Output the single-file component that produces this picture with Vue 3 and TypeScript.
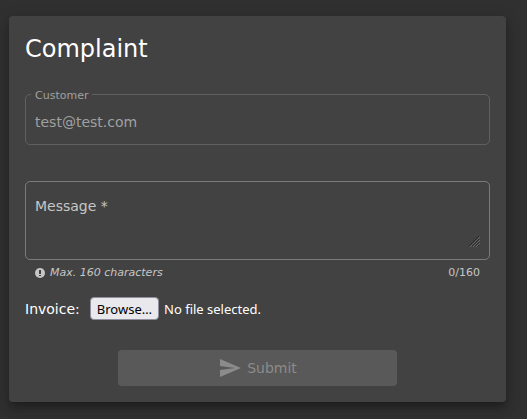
<script setup lang="ts">
import { computed, ref } from 'vue'

const MAX_LENGTH = 160

const customer = ref('test@test.com')
const message = ref('')
const fileName = ref('')
const fileInput = ref<HTMLInputElement | null>(null)

const canSubmit = computed(() => message.value.trim().length > 0)

function onFileChange(event: Event): void {
  const input = event.target as HTMLInputElement
  fileName.value = input.files?.[0]?.name ?? ''
}
</script>

<template>
  <main class="card">
    <h1 class="title">Complaint</h1>
    <form class="form" @submit.prevent>
      <fieldset class="outline customer" disabled>
        <legend class="legend"><label for="customer">Customer</label></legend>
        <input id="customer" v-model="customer" class="text-input" type="text" />
      </fieldset>

      <div class="message-field">
        <div class="outline message">
          <textarea
            id="message"
            v-model="message"
            class="textarea"
            rows="3"
            :maxlength="MAX_LENGTH"
            required
          ></textarea>
          <label class="message-label" :class="{ floating: message }" for="message">Message *</label>
          <svg class="grip" viewBox="0 0 11 11" aria-hidden="true">
            <path class="grip-dark" d="M0 10 10 0M3 10 10 3M6 10 10 6M9 10 10 9" />
            <path class="grip-light" d="M1 11 11 1M4 11 11 4M7 11 11 7" />
          </svg>
        </div>
        <div class="hints">
          <svg class="hint-icon" viewBox="0 0 10 10" aria-hidden="true">
            <circle cx="5" cy="5" r="5" fill="#c6c6c6" />
            <path d="M4 2h2v4H4zM4 7h2v1H4z" fill="#424242" />
          </svg>
          <em>Max. 160 characters</em>
          <span class="counter">{{ message.length }}/{{ MAX_LENGTH }}</span>
        </div>
      </div>

      <div class="invoice">
        <label for="invoice">Invoice:</label>
        <input
          id="invoice"
          ref="fileInput"
          class="file-input"
          type="file"
          tabindex="-1"
          @change="onFileChange"
        />
        <button class="browse" type="button" @click="fileInput?.click()">Browse…</button>
        <span class="file-name">{{ fileName || 'No file selected.' }}</span>
      </div>

      <button class="submit" type="submit" :disabled="!canSubmit">
        <svg class="send" viewBox="0 0 24 24" aria-hidden="true">
          <path d="M2.01 21L23 12 2.01 3 2 10l15 2-15 2z" fill="currentColor" />
        </svg>
        <span>Submit</span>
      </button>
    </form>
  </main>
</template>

<style>
body {
  background: #303030;
}
</style>

<style scoped>
.card {
  margin: 16px 21px 16px 9px;
  padding: 16px;
  border-radius: 4px;
  background: #424242;
  color: #fff;
  font: 14px/20px "DejaVu Sans", sans-serif;
  box-shadow:
    0 5px 5px -3px rgba(0, 0, 0, 0.2),
    0 8px 10px 1px rgba(0, 0, 0, 0.14),
    0 3px 14px 2px rgba(0, 0, 0, 0.12);
}

.title {
  margin: 0 0 21px;
  font-size: 24px;
  line-height: 34px;
  font-weight: 400;
}

.form {
  display: flex;
  flex-direction: column;
}

.outline {
  box-sizing: border-box;
  min-width: 0;
  margin: 0;
  border: 1px solid #7b7b7b;
  border-radius: 5px;
}

.customer {
  padding: 0 9px 12px 5px;
  border-color: #606060;
  color: #a0a0a0;
}

.legend {
  padding: 2px 4px 0;
  font-size: 11px;
  line-height: 13px;
}

.text-input,
.textarea {
  display: block;
  box-sizing: border-box;
  width: 100%;
  margin: 0;
  padding: 0;
  border: 0;
  outline: 0;
  background: transparent;
  color: inherit;
  font: inherit;
}

.text-input {
  height: 20px;
  margin-top: 10px;
  padding-left: 4px;
}

.message-field {
  margin-top: 36px;
}

.message {
  position: relative;
  padding: 14px 9px 12px;
}

.message:focus-within {
  border-color: #fff;
}

.textarea {
  height: 51px;
  resize: vertical;
}

.textarea::-webkit-resizer {
  display: none;
}

.message-label {
  position: absolute;
  top: 14px;
  left: 9px;
  color: #c6c6c6;
  pointer-events: none;
}

.message-label.floating {
  top: -8px;
  padding: 0 4px;
  background: #424242;
  font-size: 11px;
  line-height: 14px;
}

.grip {
  position: absolute;
  right: 9px;
  bottom: 12px;
  width: 11px;
  height: 11px;
  pointer-events: none;
}

.grip-dark {
  stroke: #2a2a2a;
}

.grip-light {
  stroke: #686868;
}

.hints {
  display: flex;
  align-items: center;
  padding: 6px 10px 0;
  color: #c6c6c6;
  font-size: 11px;
  line-height: 14px;
}

.hint-icon {
  width: 10px;
  height: 10px;
  margin-right: 5px;
}

.counter {
  margin-left: auto;
}

.invoice {
  position: relative;
  display: flex;
  align-items: center;
  margin-top: 17px;
}

.file-input {
  position: absolute;
  width: 1px;
  height: 1px;
  opacity: 0;
  pointer-events: none;
}

.browse {
  height: 23px;
  margin: 0 5px 0 10px;
  padding: 0 6px;
  border: 1px solid #8f8f9d;
  border-radius: 4px;
  background: #e9e9ed;
  color: #000;
  font: 13px/20px "Noto Sans", sans-serif;
}

.file-name {
  font-family: "Noto Sans", sans-serif;
  font-size: 13px;
}

.submit {
  display: flex;
  align-items: center;
  justify-content: center;
  gap: 5px;
  align-self: center;
  width: 60%;
  height: 36px;
  margin-top: 30px;
  padding: 0;
  border: 0;
  border-radius: 4px;
  background: #4f5fc0;
  color: #fff;
  font: inherit;
}

.submit:disabled {
  background: #595959;
  color: #8b8b8b;
}

.send {
  width: 24px;
  height: 24px;
}
</style>
